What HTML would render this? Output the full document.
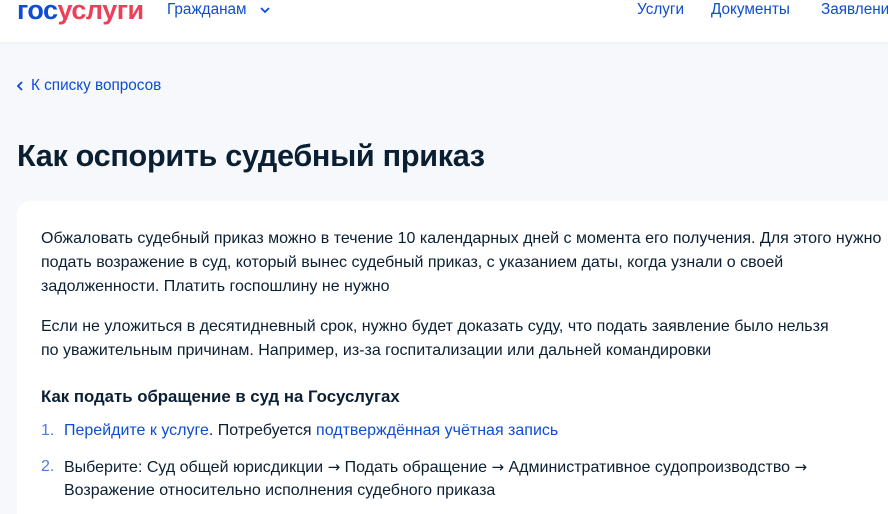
<!DOCTYPE html>
<html style="width:888px;height:514px;overflow:hidden"><head><meta charset="utf-8"><style>
*{margin:0;padding:0;box-sizing:border-box}
body{width:888px;height:514px;overflow:hidden;background:#f6f8fb;font-family:"Liberation Sans",sans-serif;color:#0b1f33;position:relative}
.hdr{position:absolute;left:0;top:0;width:888px;height:42px;background:#fff;box-shadow:0 1px 4px rgba(0,0,0,.04)}
.a{position:absolute;white-space:nowrap}
.blue{color:#0d4cd3}
.logo{left:17px;top:-5px;font-size:27px;font-weight:bold;letter-spacing:-0.5px}
.card{position:absolute;left:17px;top:201px;width:900px;height:330px;background:#fff;border-radius:14px}
.t{font-size:16px;line-height:24px}
.ar{font-family:"DejaVu Sans",sans-serif;font-size:15px}
.n{color:#4d7de0;position:absolute;left:0}
</style></head><body>
<div class="hdr">
<div class="a logo"><span style="color:#0d4cd3">гос</span><span style="color:#ee3f58">услуги</span></div>
<div class="a blue" style="left:167px;top:1px;font-size:15.3px">Гражданам</div>
<svg class="a" style="left:259px;top:5px" width="12" height="10"><path d="M2 3l4 4 4-4" stroke="#0d4cd3" stroke-width="1.8" fill="none"/></svg>
<div class="a blue" style="left:637px;top:1px;font-size:15.3px">Услуги</div>
<div class="a blue" style="left:711px;top:1px;font-size:15.3px">Документы</div>
<div class="a blue" style="left:821px;top:1px;font-size:15.3px">Заявления</div>
</div>
<svg class="a" style="left:15px;top:80px" width="10" height="12"><path d="M7 2L3 6l4 4" stroke="#0d4cd3" stroke-width="1.8" fill="none"/></svg>
<div class="a blue" style="left:31px;top:77px;font-size:15.3px">К списку вопросов</div>
<div class="a" style="left:17px;top:139px;font-size:30.6px;font-weight:bold;letter-spacing:-0.3px">Как оспорить судебный приказ</div>
<div class="card"></div>
<div class="a t" style="left:41px;top:227px">Обжаловать судебный приказ можно в течение 10 календарных дней с момента его получения. Для этого нужно<br>подать возражение в суд, который вынес судебный приказ, с указанием даты, когда узнали о своей<br>задолженности. Платить госпошлину не нужно</div>
<div class="a t" style="left:41px;top:315px">Если не уложиться в десятидневный срок, нужно будет доказать суду, что подать заявление было нельзя<br>по уважительным причинам. Например, из-за госпитализации или дальней командировки</div>
<div class="a" style="left:41px;top:387px;font-size:16.8px;font-weight:bold">Как подать обращение в суд на Госуслугах</div>
<div class="a t" style="left:41px;top:419px;width:860px"><span class="n">1.</span><span style="position:absolute;left:23px"><span class="blue">Перейдите к услуге</span>. Потребуется <span class="blue">подтверждённая учётная запись</span></span></div>
<div class="a t" style="left:41px;top:455px;width:860px"><span class="n">2.</span><span style="position:absolute;left:23px">Выберите: Суд общей юрисдикции <span class="ar">→</span> Подать обращение <span class="ar">→</span> Административное судопроизводство <span class="ar">→</span></span></div>
<div class="a t" style="left:64px;top:479px">Возражение относительно исполнения судебного приказа</div>
</body></html>
